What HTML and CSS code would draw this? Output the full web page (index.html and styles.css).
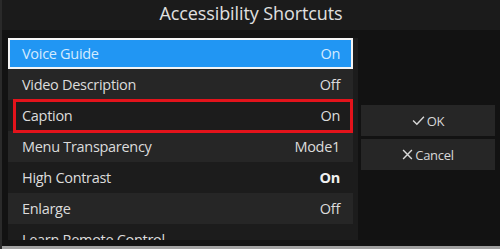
FILE: index.html
```html
<!DOCTYPE html>
<html>
<head>
<meta charset="utf-8">
<link rel="stylesheet" href="styles.css">
</head>
<body>
<div class="screen">
  <div class="titlebar">Accessibility Shortcuts</div>
  <div class="main">
    <div class="list">
      <div class="row selected"><span>Voice Guide</span><span>On</span></div>
      <div class="row alt"><span>Video Description</span><span>Off</span></div>
      <div class="row"><span>Caption</span><span>On</span></div>
      <div class="row alt"><span>Menu Transparency</span><span>Mode1</span></div>
      <div class="row"><span>High Contrast</span><span class="bold">On</span></div>
      <div class="row alt"><span>Enlarge</span><span>Off</span></div>
      <div class="row"><span>Learn Remote Control</span><span></span></div>
      <div class="redbox"></div>
    </div>
    <div class="buttons">
      <div class="btn"><svg class="ico" viewBox="0 0 12 10" width="13" height="11"><path d="M1 5 L4.5 8.5 L11 1.5" fill="none" stroke="#d8d8d8" stroke-width="1.3"/></svg>OK</div>
      <div class="btn"><svg class="ico" viewBox="0 0 10 10" width="11" height="11"><path d="M1 1 L9 9 M9 1 L1 9" fill="none" stroke="#d8d8d8" stroke-width="1.3"/></svg>Cancel</div>
    </div>
  </div>
  <div class="bottomline"></div>
</div>
</body>
</html>
```
FILE: styles.css
```css
html, body {
  margin: 0;
  padding: 0;
  background: #121212;
}
.screen {
  width: 500px;
  height: 249px;
  display: flex;
  flex-direction: column;
  background: #121212;
  border-left: 2px solid #2a2a2a;
  box-sizing: border-box;
  overflow: hidden;
  font-family: "Open Sans", "Noto Sans", sans-serif;
  color: #dcdcdc;
}
.titlebar {
  height: 30px;
  flex: none;
  background: #1b1b1b;
  text-align: center;
  font-size: 18px;
  line-height: 27px;
  color: #e0e0e0;
  letter-spacing: -0.1px;
}
.main {
  flex: 1;
  display: flex;
  padding-top: 8px;
  padding-left: 6px;
  min-height: 0;
}
.list {
  position: relative;
  width: 350px;
  height: 202px;
  overflow: hidden;
  background: #1c1c1c;
  flex: none;
}
.row {
  width: 345px;
  height: 31px;
  box-sizing: border-box;
  display: flex;
  justify-content: space-between;
  align-items: center;
  padding: 0 13px 0 14px;
  font-size: 14.5px;
  letter-spacing: -0.3px;
  background: #1c1c1c;
}
.row.alt {
  background: #262626;
}
.row.selected {
  background: #2196f3;
  border: 2px solid #f4f4f4;
  color: #d4ebff;
  padding: 0 11px 0 12px;
}
.bold {
  font-weight: 700;
  color: #f0f0f0;
}
.redbox {
  position: absolute;
  left: 5px;
  top: 61px;
  width: 340px;
  height: 34px;
  border: 3px solid #e3131b;
  box-sizing: border-box;
}
.buttons {
  display: flex;
  flex-direction: column;
  gap: 3px;
  margin-left: 3px;
  margin-top: 67px;
}
.btn {
  width: 134px;
  height: 31px;
  background: #262626;
  display: flex;
  align-items: center;
  justify-content: center;
  gap: 2px;
  font-size: 13px;
  color: #d8d8d8;
  letter-spacing: -0.3px;
}
.ico {
  display: block;
}
.bottomline {
  height: 3px;
  flex: none;
  background: #a0a0a0;
}
```
